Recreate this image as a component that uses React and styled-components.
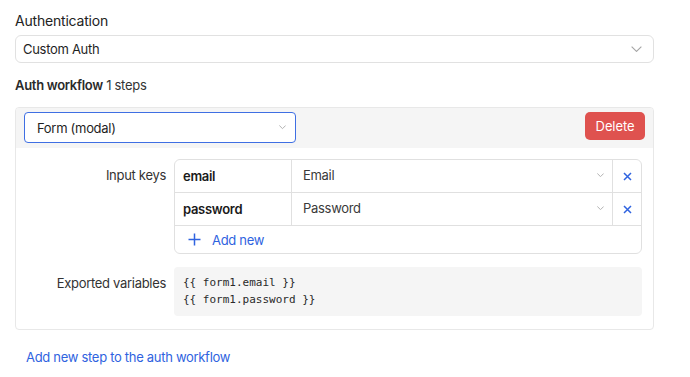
import React from "react";
import styled, { createGlobalStyle } from "styled-components";

const Global = createGlobalStyle`
  html, body { margin: 0; padding: 0; background: #fff; }
  body { font-family: Inter, "Noto Sans", sans-serif; color: #1d1d1f; letter-spacing: -0.3px; }
`;

const Page = styled.div`
  width: 639px;
  padding: 12px 0 0 15px;
  display: flex;
  flex-direction: column;
`;

const FieldLabel = styled.div`
  font-size: 14px;
  line-height: 17px;
  color: #222;
  margin-bottom: 6px;
  letter-spacing: -0.2px;
`;

const Select = styled.div`
  box-sizing: border-box;
  height: ${(p) => p.$h || 28}px;
  width: ${(p) => (p.$w ? p.$w + "px" : "100%")};
  border: 1px solid ${(p) => (p.$focus ? "#3f6fe3" : "#e1e1e1")};
  border-radius: ${(p) => (p.$focus ? 4 : 6)}px;
  background: #fff;
  display: flex;
  align-items: center;
  justify-content: space-between;
  padding: 0 ${(p) => p.$pr || 11}px 0 ${(p) => p.$pl || 7}px;
  font-size: 13px;
  color: #1f1f1f;
`;

const SectionTitle = styled.div`
  font-size: 13px;
  line-height: 16px;
  color: #333;
  margin: 14px 0 14px;
  b { font-weight: 600; color: #2a2a2a; }
`;

const Card = styled.div`
  border: 1px solid #e8e8e8;
  border-radius: 4px;
  overflow: hidden;
`;

const CardHeader = styled.div`
  background: #f5f5f5;
  height: 40px;
  box-sizing: border-box;
  padding: 4px 8px 0 8px;
  display: flex;
  justify-content: space-between;
  align-items: flex-start;
`;

const DeleteButton = styled.button`
  height: 28px;
  width: 60px;
  border: none;
  border-radius: 5px;
  background: #df524f;
  color: #fff;
  font-family: inherit;
  font-size: 13px;
  letter-spacing: -0.1px;
  padding: 0;
`;

const CardBody = styled.div`
  display: grid;
  grid-template-columns: 150px 468px;
  column-gap: 8px;
  row-gap: 13px;
  padding: 11px 11px 13px 0;
`;

const RowLabel = styled.div`
  text-align: right;
  font-size: 13px;
  color: #333;
  padding-top: ${(p) => p.$pt}px;
`;

const Table = styled.div`
  border: 1px solid #e0e0e0;
  border-radius: 6px;
  overflow: hidden;
`;

const KeyRow = styled.div`
  display: grid;
  grid-template-columns: 116px 1fr 29px;
  height: 32px;
  border-bottom: 1px solid #e0e0e0;
  & > div + div { border-left: 1px solid #e0e0e0; }
`;

const KeyCell = styled.div`
  display: flex;
  align-items: center;
  padding-left: 8px;
  font-size: 13px;
  font-weight: 600;
  color: #1a1a1a;
`;

const ValueCell = styled.div`
  display: flex;
  align-items: center;
  justify-content: space-between;
  padding: 0 8px 0 11px;
  font-size: 13px;
  color: #3a3a3a;
  padding-bottom: ${(p) => (p.$up ? 2 : 0)}px;
`;

const RemoveCell = styled.div`
  display: flex;
  align-items: center;
  justify-content: center;
`;

const AddRow = styled.div`
  height: 27px;
  display: flex;
  align-items: center;
  gap: 11px;
  padding-left: 13px;
  font-size: 13px;
  color: #2f63e0;
`;

const Code = styled.div`
  background: #f5f5f5;
  border-radius: 4px;
  padding: 8px 9px;
  height: 49px;
  box-sizing: border-box;
  font-family: "DejaVu Sans Mono", "Liberation Mono", monospace;
  font-size: 11px;
  letter-spacing: 0;
  line-height: 16.5px;
  color: #2a2a2a;
  white-space: pre;
`;

const Link = styled.a`
  margin: 19px 0 0 11px;
  font-size: 13px;
  color: #2f63e0;
  text-decoration: none;
`;

const Chevron = ({ w = 10, color = "#9a9a9a" }) => (
  <svg width={w} height={w / 2 + 1} viewBox="0 0 10 6" fill="none">
    <path d="M0.5 0.5 L5 5 L9.5 0.5" stroke={color} strokeWidth={w > 8 ? 1 : 1.4} />
  </svg>
);

const XIcon = () => (
  <svg width="9" height="9" viewBox="0 0 9 9">
    <path d="M1 1 L8 8 M8 1 L1 8" stroke="#2f63e0" strokeWidth="1.5" />
  </svg>
);

const Plus = () => (
  <svg width="13" height="13" viewBox="0 0 13 13">
    <path d="M6.5 0.5 V12.5 M0.5 6.5 H12.5" stroke="#2f63e0" strokeWidth="1.5" />
  </svg>
);

const keys = [
  { key: "email", value: "Email" },
  { key: "password", value: "Password" },
];

export default function App() {
  return (
    <>
      <Global />
      <Page>
        <FieldLabel>Authentication</FieldLabel>
        <Select>
          <span>Custom Auth</span>
          <Chevron w={11} color="#a5a5a5" />
        </Select>
        <SectionTitle>
          <b>Auth workflow</b> 1 steps
        </SectionTitle>
        <Card>
          <CardHeader>
            <Select $focus $w={272} $h={31} $pl={12} $pr={9}>
              <span>Form (modal)</span>
              <Chevron w={7} color="#b0b0b0" />
            </Select>
            <DeleteButton>Delete</DeleteButton>
          </CardHeader>
          <CardBody>
            <RowLabel $pt={8}>Input keys</RowLabel>
            <Table>
              {keys.map((k) => (
                <KeyRow key={k.key}>
                  <KeyCell>{k.key}</KeyCell>
                  <ValueCell $up>
                    <span>{k.value}</span>
                    <Chevron w={7} color="#b0b0b0" />
                  </ValueCell>
                  <RemoveCell>
                    <XIcon />
                  </RemoveCell>
                </KeyRow>
              ))}
              <AddRow>
                <Plus />
                <span>Add new</span>
              </AddRow>
            </Table>
            <RowLabel $pt={8}>Exported variables</RowLabel>
            <Code>{"{{ form1.email }}\n{{ form1.password }}"}</Code>
          </CardBody>
        </Card>
        <Link href="#">Add new step to the auth workflow</Link>
      </Page>
    </>
  );
}
